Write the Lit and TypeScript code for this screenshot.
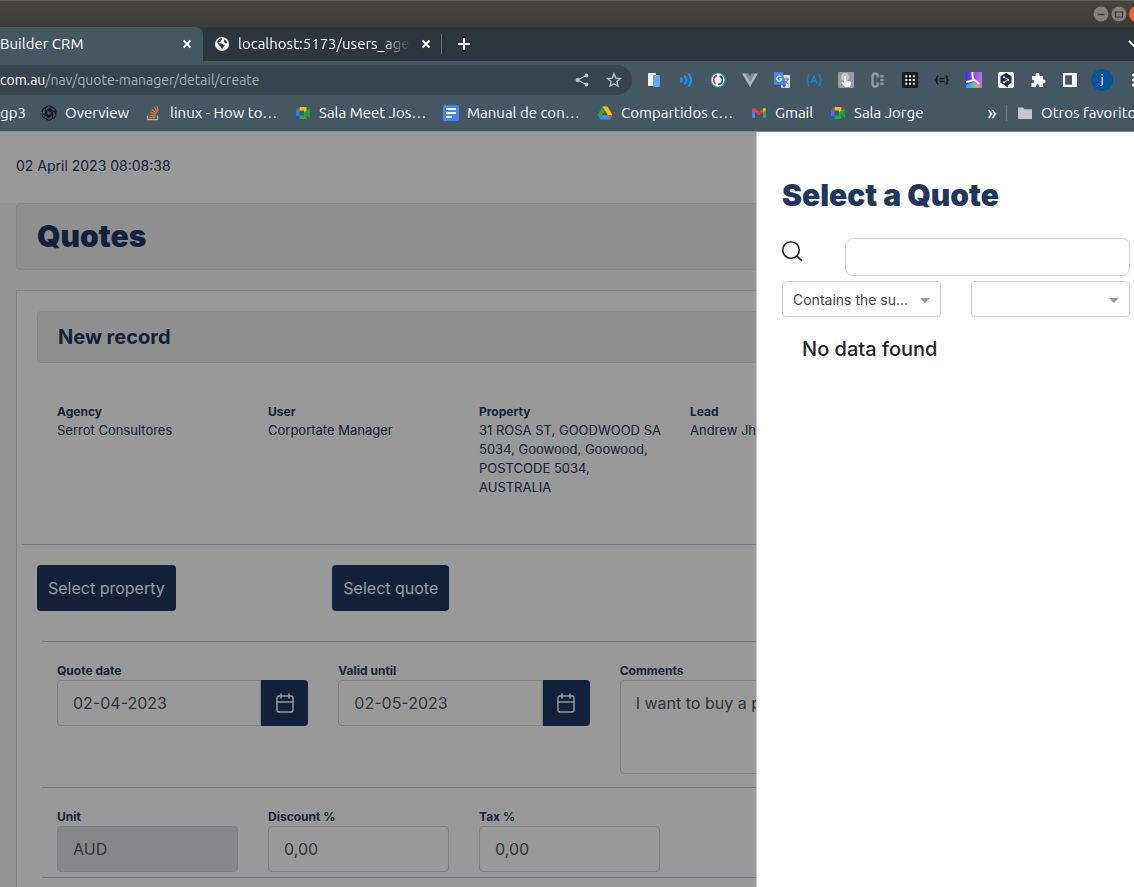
import { LitElement, html, css, svg, TemplateResult } from "lit";
import { customElement } from "lit/decorators.js";

const icon = (size: number, body: TemplateResult, box = `0 0 ${size} ${size}`) =>
  html`<svg width=${size} height=${size} viewBox=${box} fill="none" aria-hidden="true">${body}</svg>`;

const close = icon(16, svg`<path d="M4.500 4.500l7 7M11.500 4.500l-7 7" stroke="#fff" stroke-width="1.800"/>`);
const plus = icon(16, svg`<path d="M8 2v12M2 8h12" stroke="#fff" stroke-width="2"/>`);
const globe = icon(16, svg`<circle cx="8" cy="8" r="7" fill="#fff"/>
  <path d="M3 6.300C3.600 4 5.600 2.400 8 2.300c.6.700.1 1.500-.8 1.900-.5.300-.2 1-.8 1.400-.7.500-1.600.2-1.700 1.100 0 .8 1.900.5 3.100.8.900.2.900 1.300 1.900 1.300.8 0 1.200.5.800 1.300-.4.700-1.100.8-1.400 1.700-.2.700-.8 1.100-1.500 1-.7-.2-.4-1.200-.7-1.900-.4-.8-1.700-.9-2.100-1.800C4.500 8.300 3.600 7.600 3 6.300zM10.600 3.400c1.400.8 2.500 2 2.800 3.600-.7.600-1.700.5-2.200-.1-.5-.7-1.600-.7-1.500-1.700.1-.8.900-1 .9-1.800z" fill="#2c363c"/>`);
const share = icon(16, svg`<path d="M12.500 3.500L3.500 8l9 4.500" stroke="#c3c8cb" stroke-width="1.300"/>
  <circle cx="12.500" cy="3.500" r="1.900" fill="#c3c8cb"/><circle cx="3.500" cy="8" r="1.900" fill="#c3c8cb"/><circle cx="12.500" cy="12.500" r="1.900" fill="#c3c8cb"/>`);
const star = icon(16, svg`<path d="M8 1.800l1.800 4.300 4.700.4-3.600 3.100 1.100 4.600L8 11.700l-4 2.500 1.100-4.600L1.500 6.500l4.700-.4z" stroke="#c3c8cb" stroke-width="1.300"/>`);
const chevron = icon(16, svg`<path d="M11 5l5 5 5-5" stroke="#fff" stroke-width="1.800"/>`);
const more = icon(16, svg`<circle cx="15.500" cy="3" r="1.500" fill="#fff"/><circle cx="15.500" cy="8" r="1.500" fill="#fff"/><circle cx="15.500" cy="13" r="1.500" fill="#fff"/>`);
const calendar = icon(24, svg`<rect x="4" y="5" width="16" height="16" rx="2"/><path d="M16 3v4M8 3v4M4 11h16"/>`);
const magnifier = icon(24, svg`<circle cx="10" cy="12" r="8.300" stroke="#212529" stroke-width="1.600"/><path d="M15.800 17.800l5 5" stroke="#212529" stroke-width="1.800"/>`);

const extensions: [string, TemplateResult][] = [
  ["Reader", svg`<rect x="2" y="1" width="8" height="13" rx="1" fill="#fff"/><rect x="7" y="3" width="7" height="12" rx="1" fill="#6aa6f8"/>`],
  ["Read aloud", svg`<path d="M2.500 5.500q2 2.500 0 5M6.500 3.500q3.400 4.500 0 9M10.500 1.500q5 6.500 0 13" stroke="#1a94f0" stroke-width="2.300"/>`],
  ["Reload", svg`<circle cx="8" cy="8" r="7" fill="#fff" stroke="#2b9fd0"/><path d="M7 3.700a4.400 4.400 0 0 0-1 8.200" stroke="#e0383c" stroke-width="1.700"/><path d="M9.500 3.900a4.400 4.400 0 0 1-1.500 8.500" stroke="#1c6690" stroke-width="1.700"/>`],
  ["Vue", svg`<path d="M0 1.500h3.500L8 9.500l4.500-8H16L8 15z" fill="#b5b5b5"/><path d="M3.500 1.500h3L8 4.300l1.500-2.800h3L8 9.500z" fill="#8a8a8a"/>`],
  ["Translate", svg`<rect x="7" y="3" width="9" height="13" rx="1" fill="#d4dadd"/><path d="M9.500 7h5.500M12 5.800V7M14 7q-.5 3-4 5M10.800 8.500q1 2.500 3.500 3.500" stroke="#66777d" stroke-width="1"/><path d="M1 0h7.500L12 13H1a1 1 0 0 1-1-1V1a1 1 0 0 1 1-1z" fill="#4a82ec"/><path d="M7.200 5a2.500 2.500 0 1 0 .5 2H5.500" stroke="#fff" stroke-width="1.200"/><path d="M8.500 13H12l-2 3z" fill="#2c5bc4"/>`],
  ["Angular", svg`<path d="M3.500 2.500Q1.800 2.500 2 5q.1 2.500-1.500 3 1.600.5 1.500 3-.2 2.500 1.500 2.500M12.500 2.500q1.700 0 1.500 2.500-.1 2.500 1.500 3-1.600.5-1.500 3 .2 2.500-1.500 2.500M5 11.500l3-7.500 3 7.500M6 9h4" stroke="#1586d0" stroke-width="1.300"/>`],
  ["Touch", svg`<rect width="16" height="16" rx="1" fill="#9c9c9c"/><circle cx="7" cy="5" r="4" fill="#c5c5c5"/><path d="M6 4.500q1-1.500 2 0v4l4 1q1.500.5 1 2L12 15H7L3.500 11q.5-1.500 2.500-.5z" fill="#fff"/>`],
  ["Cookies", svg`<path d="M7.700 5.500V4q0-2.500-2.300-2.500T2.500 4v8q0 2.500 2.700 2.500t2.500-2.500v-1.500" stroke="#94999b" stroke-width="2.400"/><path d="M12 3v2.500M12 6.700v2.600M12 10.500V13" stroke="#94999b" stroke-width="3.400"/>`],
  ["Grid", svg`<rect width="16" height="16" rx="1" fill="#191b1d"/><path d="M3.200 4.200h2M7 4.200h2M10.800 4.200h2M3.200 8h2M7 8h2M10.800 8h2M3.200 11.800h2M7 11.800h2M10.800 11.800h2" stroke="#fff" stroke-width="2"/>`],
  ["JSON", svg`<path d="M4.500 4q-1.800 0-1.600 1.800.2 2-1.400 2.200 1.600.2 1.400 2.200Q2.700 12 4.500 12M11.500 4q1.800 0 1.600 1.800-.2 2 1.400 2.200-1.600.2-1.400 2.200.2 1.800-1.600 1.800" stroke="#14181a" stroke-width="1.500"/><path d="M5.500 6.500h5M5.500 9.500h5" stroke="#14181a" stroke-width="1.400"/>`],
  ["Palette", svg`<defs><linearGradient id="pa" x1="0" y1="0" x2="1" y2="0"><stop stop-color="#3a2cff"/><stop offset="1" stop-color="#c86cf8"/></linearGradient><linearGradient id="pb"><stop stop-color="#35a5f0"/><stop offset=".4" stop-color="#42c8b0"/><stop offset=".7" stop-color="#d99a78"/><stop offset="1" stop-color="#e86ab0"/></linearGradient></defs><rect width="16" height="16" rx="1" fill="url(#pa)"/><path d="M0 13l8-3 8 3v2q0 1-1 1H1q-1 0-1-1z" fill="url(#pb)"/><path d="M6.500 0q-.5 5 1.500 8.500M8 8Q5 9 0 10M8 8q3 1 5 4" stroke="#fff" stroke-width="2"/>`],
  ["DeepL", svg`<rect width="16" height="16" rx="2" fill="#fff"/><path d="M8 1l5.500 3.200v6.600L10 13v2.500L7 13.600l-4.500-2.800V4.200z" fill="#142c46"/><path d="M6 5.300l4.500 2.400L6 10.200" stroke="#fff" stroke-width=".8"/><circle cx="6" cy="5.300" r="1" fill="#fff"/><circle cx="10.300" cy="7.700" r="1" fill="#fff"/><circle cx="6" cy="10.200" r="1" fill="#fff"/>`],
  ["Extensions", svg`<path d="M2 4h3.500V3a2 2 0 0 1 4 0v1H13v3.500h.5a2 2 0 0 1 0 4H13V15H9.300v-1a1.700 1.700 0 0 0-3.400 0v1H1.500v-4h1a1.600 1.600 0 0 0 0-3.300H2z" fill="#fff"/>`],
  ["Side panel", svg`<path d="M1 1h14v14H1zM3.200 3.200v9.600H10V3.200z" fill="#fff" fill-rule="evenodd"/>`],
];

const meet = svg`<path d="M1 5l4-3v3z" fill="#ea4335"/><path d="M1 5h3.500v6H1z" fill="#2f7df6"/><path d="M1 11h3.500v3H2q-1 0-1-1z" fill="#1556c8"/><path d="M5 2h5.500q1 0 1 1v4.500L9 8V5.500H4.500z" fill="#fbbc04"/><path d="M4.500 10.500H9V8l2.500 2v3q0 1-1 1h-6z" fill="#2aa64c"/><path d="M8.500 8l5.500-4.500q1-.5 1 .5v8q0 1-1 .5z" fill="#1fa046"/>`;
const bookmarks: [string, TemplateResult | null][] = [
  ["gp3", null],
  ["Overview", svg`<g stroke="#10181c" stroke-width="1.100"><path d="M8 .8a3.600 3.600 0 0 1 3.300 2.100M8 .8a3.600 3.600 0 0 0-3.600 3.600v4L8 10.500"/><path d="M14.300 4.400a3.600 3.600 0 0 1 .1 3.900M14.300 4.400a3.600 3.600 0 0 0-5-1.300L5.600 5.300v4.200"/><path d="M14.300 11.600a3.600 3.600 0 0 1-3.400 1.800M14.300 11.600a3.600 3.600 0 0 0-1.300-5L9.300 4.500 5.700 6.600"/><path d="M8 15.200a3.600 3.600 0 0 1-3.300-2.100M8 15.200a3.600 3.600 0 0 0 3.600-3.600v-4L8 5.500"/><path d="M1.700 11.600a3.600 3.600 0 0 1-.1-3.900M1.700 11.600a3.600 3.600 0 0 0 5 1.300l3.700-2.200V6.500"/><path d="M1.700 4.400a3.600 3.600 0 0 1 3.400-1.800M1.700 4.400a3.600 3.600 0 0 0 1.300 5l3.700 2.100 3.600-2.100"/></g>`],
  ["linux - How to…", svg`<path d="M1.500 10.500v4.200h10v-4.200" stroke="#a7b0b4" stroke-width="1.300"/><path d="M3.500 12.500h6M3.700 10.100l6 .7M4.300 7.400l5.700 1.700M5.700 4.600l5 3.300M8.200 2.100l3.300 4.800M11 .8l1 5" stroke="#e27a25" stroke-width="1.300"/>`],
  ["Sala Meet Jos…", meet],
  ["Manual de con…", svg`<rect width="16" height="16" rx="1.500" fill="#4285f4"/><path d="M3 4h10M3 8h10M3 12h6" stroke="#fff" stroke-width="1.800"/>`],
  ["Compartidos c…", svg`<path d="M5.500 1.500h5L5.700 9.700 3 14.500.5 10z" fill="#2ba552"/><path d="M5.500 1.500h5l5 8.500h-5z" fill="#fbbc04"/><path d="M5.500 10h10L13 14.500H3z" fill="#4285f4"/><path d="M8 5.800L10.500 10h-5z" fill="#455760"/><path d="M12.500 10h3L13 14.500z" fill="#ea4335"/>`],
  ["Gmail", svg`<path d="M1 4l3 2.200V13H2q-1 0-1-1z" fill="#4285f4"/><path d="M15 4l-3 2.200V13h2q1 0 1-1z" fill="#34a853"/><path d="M1 4.500Q1.500 2 4 3.500L8 6.700l4-3.200V7L8 10.200 4 7 1 5z" fill="#ea4335"/><path d="M12 3.500q2.500-1.500 3 1v.5l-3 2.200z" fill="#fbbc04"/>`],
  ["Sala Jorge", meet],
];

@customElement("browser-chrome")
class BrowserChrome extends LitElement {
  static styles = css`
    :host { display: block; overflow: hidden; color: #fff; background: #455760; font: 15px/20px Ubuntu, "Noto Sans", sans-serif; border-bottom: 1px solid #7b8a91; }
    * { box-sizing: border-box; }
    svg { display: block; flex: none; }
    button { display: flex; align-items: center; justify-content: center; flex: none; margin: 0; padding: 0; border: 0; background: none; color: inherit; font: inherit; }
    .title { display: flex; justify-content: flex-end; align-items: center; height: 27px; padding-left: 8px; border-top: 1px solid #62605a; background: linear-gradient(#474540, #3c3b37); }
    .tabs { display: flex; align-items: center; height: 34px; background: #2c363c; }
    .tab { display: flex; align-items: center; height: 34px; gap: 8px; }
    .active { flex: 0 0 203px; padding-right: 8px; background: #455760; border-radius: 0 8px 0 0; }
    .second { flex: 0 0 239px; height: 20px; padding: 0 7px 0 11px; border-right: 1px solid #66727a; }
    .label { flex: 1; justify-content: flex-start; min-width: 0; overflow: hidden; white-space: nowrap; }
    .fade { max-width: 175px; -webkit-mask-image: linear-gradient(to left, transparent, #000 30px); mask-image: linear-gradient(to left, transparent, #000 30px); }
    .add { width: 43px; }
    .spacer { flex: 1; }
    .tools { display: flex; align-items: center; height: 37px; }
    .address { display: flex; flex: 1; min-width: 0; align-items: center; height: 30px; margin-right: 6px; padding-right: 2px; border-radius: 0 15px 15px 0; background: #37444b; }
    .url { flex: 1; color: #a6b0b5; font-size: 14px; white-space: nowrap; }
    .host { color: #fff; }
    .tool { width: 32px; height: 30px; }
    .avatar { width: 22px; height: 22px; border-radius: 11px; background: #04549c; font-size: 13px; }
    .menu { width: 16px; }
    .marks { display: grid; grid-template-columns: 41px 105px 149px 148px 154px 154px 79px 1fr auto auto; align-items: center; height: 33px; padding-bottom: 4px; }
    .mark { display: flex; align-items: center; gap: 8px; color: inherit; text-decoration: none; white-space: nowrap; min-width: 0; }
    .overflow { width: 28px; font-size: 20px; }
    .others { width: 128px; height: 16px; padding-left: 10px; border-left: 1px solid #6e7d85; }
  `;
  render() {
    return html`
      <div class="title">
        <button aria-label="Minimize">${icon(18, svg`<circle cx="9" cy="9" r="7.500" fill="#82807a"/><path d="M5.500 9.500h7" stroke="#35342f" stroke-width="1.400"/>`)}</button>
        <button aria-label="Maximize">${icon(18, svg`<circle cx="9" cy="9" r="7.500" fill="#82807a"/><path d="M5.500 7h7v5h-7z" stroke="#35342f" stroke-width="1.200"/>`)}</button>
        <button aria-label="Close window"><svg width="6" height="18" viewBox="0 0 6 18" aria-hidden="true"><circle cx="9" cy="9" r="8" fill="#ee6438"/></svg></button>
      </div>
      <div class="tabs">
        <div class="tab active"><button class="label">Builder CRM</button><button aria-label="Close tab">${close}</button></div>
        <div class="tab second">${globe}<button class="label fade">localhost:5173/users_age</button><button aria-label="Close tab">${close}</button></div>
        <button class="add" aria-label="New tab">${plus}</button>
        <span class="spacer"></span>
        <button aria-label="Search tabs">${chevron}</button>
      </div>
      <div class="tools">
        <div class="address">
          <div class="url" role="textbox" aria-label="Address" contenteditable="true"><span class="host">com.au</span>/nav/quote-manager/detail/create</div>
          <button class="tool" aria-label="Share">${share}</button>
          <button class="tool" aria-label="Bookmark">${star}</button>
        </div>
        ${extensions.map(([name, body]) => html`<button class="tool" aria-label=${name}>${icon(16, body)}</button>`)}
        <button class="tool" aria-label="Profile"><span class="avatar">j</span></button>
        <button class="menu" aria-label="Menu">${more}</button>
      </div>
      <nav class="marks">
        ${bookmarks.map(([name, body]) => html`<a class="mark" href="#">${body ? icon(16, body) : null}${name}</a>`)}
        <button class="overflow" aria-label="More bookmarks">»</button>
        <a class="mark others" href="#">${icon(16, svg`<path d="M1 2.500h5l1.500 1.700H15V14H1z" fill="#c4c6c7"/>`)}Otros favoritos</a>
      </nav>`;
  }
}

@customElement("quote-page")
class QuotePage extends LitElement {
  static styles = css`
    :host { display: block; background: #f7faf8; color: #1f375f; font: 13px/19px Inter, sans-serif; }
    * { box-sizing: border-box; }
    svg { display: block; }
    h1, h2, p, dl, dd { margin: 0; }
    .top { padding: 24px 16px 27px; background: #fff; font-size: 14px; line-height: 20px; }
    .main { padding: 0 222px 0 16px; }
    .band { padding: 0 20px; border: 1px solid #dedfdf; border-radius: 4px; background: #efefef; }
    .page-title { font-size: 30px; line-height: 65px; font-weight: 900; }
    .card { margin-top: 20px; padding: 20px 5px 40px; border: 1px solid #dadcde; background: #fff; }
    .head { margin: 0 15px; }
    .card-title { font-size: 20px; line-height: 50px; font-weight: 700; }
    .row { display: grid; gap: 30px; margin: 0 20px; padding: 0 15px; align-items: start; }
    .four { grid-template-columns: repeat(4, minmax(0, 1fr)); }
    .three { grid-template-columns: repeat(3, minmax(0, 1fr)); }
    .facts { padding: 39px 15px 47px; }
    .value { white-space: pre; }
    .name { display: block; font-size: 12px; line-height: 19px; font-weight: 700; }
    .rule { height: 0; margin: 0; border: 0; border-top: 1px solid #c6c8d4; }
    .inset { margin: 0 20px; }
    .actions { display: grid; grid-template-columns: repeat(3, minmax(0, 1fr)); gap: 32px; padding: 20px 15px 30px; }
    .primary { justify-self: start; height: 46px; padding: 0 11px; border: 0; border-radius: 4px; background: #1f375f; color: #fff; font: 16px/24px Inter, sans-serif; }
    .fields { padding-top: 19px; }
    .dates { padding-bottom: 13px; }
    .money { padding-bottom: 5px; }
    .box { display: block; width: 100%; min-width: 0; height: 46px; margin: 0; padding: 10px 15px; border: 1px solid #d0d4d9; border-radius: 4px; background: #fff; color: #54585e; font: 16px/24px Inter, sans-serif; resize: none; outline: 0; }
    .box:disabled { background: #dfe2e5; }
    .area { height: 94px; }
    .date { display: flex; }
    .date .box { border-radius: 4px 0 0 4px; }
    .pick { display: grid; place-items: center; flex: 0 0 47px; height: 46px; padding: 0; border: 0; border-radius: 0 4px 4px 0; background: #1f375f; stroke: #fff; stroke-width: 1.5; stroke-linecap: round; stroke-linejoin: round; }
  `;
  private fact(name: string, value: string) {
    return html`<div><dt class="name">${name}</dt><dd class="value">${value}</dd></div>`;
  }
  private date(id: string, name: string, value: string) {
    return html`<div><label class="name" for=${id}>${name}</label><div class="date"><input class="box" id=${id} .value=${value}><button class="pick" aria-label="Pick ${name}">${calendar}</button></div></div>`;
  }
  private field(id: string, name: string, value: string, off = false) {
    return html`<div><label class="name" for=${id}>${name}</label><input class="box" id=${id} .value=${value} ?disabled=${off}></div>`;
  }
  render() {
    return html`
      <header class="top">02 April 2023 08:08:38</header>
      <main class="main">
        <div class="band"><h1 class="page-title">Quotes</h1></div>
        <section class="card">
          <div class="band head"><h2 class="card-title">New record</h2></div>
          <dl class="row four facts">
            ${this.fact("Agency", "Serrot Consultores")}
            ${this.fact("User", "Corportate Manager")}
            ${this.fact("Property", "31 ROSA ST, GOODWOOD SA\n5034, Goowood, Goowood,\nPOSTCODE 5034,\nAUSTRALIA")}
            ${this.fact("Lead", "Andrew Jh")}
          </dl>
          <hr class="rule">
          <div class="actions"><button class="primary">Select property</button><button class="primary">Select quote</button></div>
          <hr class="rule inset">
          <div class="row three fields dates">
            ${this.date("quote-date", "Quote date", "02-04-2023")}
            ${this.date("valid-until", "Valid until", "02-05-2023")}
            <div><label class="name" for="comments">Comments</label><textarea class="box area" id="comments" .value=${"I want to buy a p"}></textarea></div>
          </div>
          <hr class="rule inset">
          <div class="row four fields money">
            ${this.field("unit", "Unit", "AUD", true)}
            ${this.field("discount", "Discount %", "0,00")}
            ${this.field("tax", "Tax %", "0,00")}
          </div>
          <hr class="rule inset">
        </section>
      </main>`;
  }
}

@customElement("quote-drawer")
class QuoteDrawer extends LitElement {
  static styles = css`
    :host { display: block; padding: 44px 4px 0 25px; border-left: 1px solid #ccc; background: #fff; color: #212529; font: 14px/20px Inter, sans-serif; }
    * { box-sizing: border-box; }
    svg { display: block; }
    .title { margin: 0 0 24px; color: #1f375f; font-size: 30px; line-height: 38px; font-weight: 900; }
    .search { display: flex; gap: 40px; }
    .text { flex: 1; min-width: 0; height: 38px; border: 1px solid #d2d4de; border-radius: 8px; background: #fff; font: inherit; }
    .filters { display: grid; grid-template-columns: 1fr 1fr; gap: 30px; margin-top: 5px; }
    .filter { display: grid; min-width: 0; }
    .filter > * { grid-area: 1 / 1; }
    .select { width: 100%; height: 36px; padding: 2px 24px 0 10px; appearance: none; border: 1px solid #cccccc; border-radius: 4px; background: #fff; color: #444; font: 14px/20px Inter, sans-serif; text-overflow: ellipsis; }
    .arrow { place-self: center end; margin: 2px 11px 0 0; border: 5px solid transparent; border-top-color: #999; border-bottom: 0; pointer-events: none; }
    .glyph { flex: none; height: 24px; margin-left: -1px; }
    .empty { margin: 0; padding: 20px 20px; font-size: 20px; line-height: 24px; font-weight: 500; }
  `;
  render() {
    return html`
      <h2 class="title">Select a Quote</h2>
      <div class="search"><label class="glyph" for="search" aria-label="Search">${magnifier}</label><input class="text" id="search" type="text"></div>
      <div class="filters">
        <div class="filter"><select class="select" aria-label="Match"><option>Contains the su...</option></select><span class="arrow"></span></div>
        <div class="filter"><select class="select" aria-label="Field"><option></option></select><span class="arrow"></span></div>
      </div>
      <p class="empty">No data found</p>`;
  }
}

@customElement("app-root")
class AppRoot extends LitElement {
  static styles = css`
    :host { display: flex; flex-direction: column; height: 100vh; overflow: hidden; }
    .view { position: relative; flex: 1; min-height: 0; overflow: hidden; }
    .page { min-height: 100%; }
    .shade { position: absolute; inset: 0; background: rgba(0, 0, 0, 0.4); }
    .drawer { position: absolute; top: 0; right: 0; bottom: 0; box-sizing: border-box; width: calc(100% / 3); }
  `;
  render() {
    return html`
      <browser-chrome></browser-chrome>
      <div class="view">
        <quote-page class="page"></quote-page>
        <div class="shade"></div>
        <quote-drawer class="drawer"></quote-drawer>
      </div>`;
  }
}
